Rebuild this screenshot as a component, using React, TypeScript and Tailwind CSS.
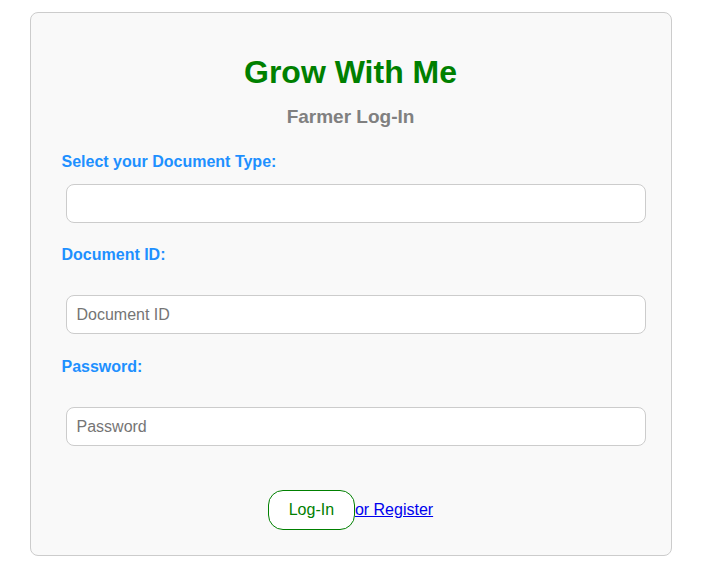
import React from "react";

export default function App() {
  const font = { fontFamily: '"Liberation Sans", Arial, sans-serif' };
  return (
    <div className="min-h-[563px] bg-white pt-3" style={font}>
      <div className="mx-auto w-[642px] rounded-lg border border-[#cccccc] bg-[#f9f9f9] px-[31px] pt-[41px] pb-[25px]">
        <h1 className="text-center text-[32px] leading-[37px] font-bold text-[#008000]">
          Grow With Me
        </h1>
        <h3 className="mt-[15px] text-center text-[19px] leading-[22px] font-bold text-[#808080]">
          Farmer Log-In
        </h3>
        <form onSubmit={(e) => e.preventDefault()}>
          <label className="mt-[25px] block text-[16px] leading-[18px] font-bold text-[#1e90ff]">
            Select your Document Type:
          </label>
          <select className="mt-[13px] ml-[4px] block h-[39px] w-[580px] appearance-none rounded-lg border border-[#cccccc] bg-white px-[10px] text-[16px]">
            <option value=""></option>
          </select>
          <label className="mt-[23px] block text-[16px] leading-[18px] font-bold text-[#1e90ff]">
            Document ID:
          </label>
          <input
            type="text"
            placeholder="Document ID"
            className="mt-[31px] ml-[4px] block h-[39px] w-[580px] rounded-lg border border-[#cccccc] bg-white px-[10px] text-[16px] text-[#333] placeholder:text-[#757575] outline-none"
          />
          <label className="mt-[24px] block text-[16px] leading-[18px] font-bold text-[#1e90ff]">
            Password:
          </label>
          <input
            type="password"
            placeholder="Password"
            className="mt-[31px] ml-[4px] block h-[39px] w-[580px] rounded-lg border border-[#cccccc] bg-white px-[10px] text-[16px] text-[#333] placeholder:text-[#757575] outline-none"
          />
          <div className="mt-[44px] flex items-center justify-center">
            <button
              type="submit"
              className="h-[40px] w-[87px] rounded-[15px] border border-[#008000] bg-white text-[16px] text-[#008000]"
            >
              Log-In
            </button>
            <a href="#" className="text-[16px] text-[#0000ee] underline">
              or Register
            </a>
          </div>
        </form>
      </div>
    </div>
  );
}
